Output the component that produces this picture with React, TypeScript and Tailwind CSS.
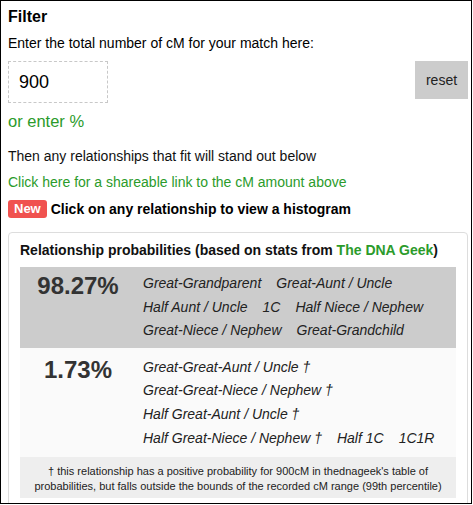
import React from 'react'

interface ProbRow {
  pct: string
  items: string[]
  bg: string
  pad: string
}

const rows: ProbRow[] = [
  {
    pct: '98.27%',
    items: [
      'Great-Grandparent',
      'Great-Aunt / Uncle',
      'Half Aunt / Uncle',
      '1C',
      'Half Niece / Nephew',
      'Great-Niece / Nephew',
      'Great-Grandchild',
    ],
    bg: 'bg-[#cccccc]',
    pad: 'pt-[5px] pb-[5px]',
  },
  {
    pct: '1.73%',
    items: [
      'Great-Great-Aunt / Uncle †',
      'Great-Great-Niece / Nephew †',
      'Half Great-Aunt / Uncle †',
      'Half Great-Niece / Nephew †',
      'Half 1C',
      '1C1R',
    ],
    bg: 'bg-[#fafafa]',
    pad: 'pt-[8px] pb-[7px]',
  },
]

function ProbabilityRow({ row }: { row: ProbRow }) {
  return (
    <div className={`flex gap-[7px] ${row.bg} ${row.pad}`}>
      <div className="w-[116px] shrink-0 text-center text-[24px] leading-[28px] font-bold text-[#333]">
        {row.pct}
      </div>
      <div className="flex flex-wrap gap-x-[15px] text-[14px] leading-[23.6px] italic text-[#222] pr-[8px]">
        {row.items.map((item) => (
          <span key={item} className="cursor-pointer whitespace-nowrap">
            {item}
          </span>
        ))}
      </div>
    </div>
  )
}

export default function App() {
  return (
    <div className="w-[472px] h-[504px] overflow-hidden border border-black bg-white pl-[7px] pt-[6px] font-['Liberation_Sans',Arial,sans-serif] text-black">
      <div className="w-[460px]">
        <div className="text-[16px] leading-[20px] font-bold">Filter</div>
        <div className="mt-[6px] text-[14px] leading-[20px]">
          Enter the total number of cM for your match here:
        </div>

        <div className="mt-[8px] flex items-start justify-between">
          <input
            defaultValue="900"
            className="w-[100px] h-[42px] border border-dashed border-[#c8c8c8] pl-[10px] text-[18px] outline-none font-['Liberation_Sans',Arial,sans-serif]"
          />
          <button className="h-[38px] w-[53px] bg-[#cccccc] text-[14px] text-[#222] font-['Liberation_Sans',Arial,sans-serif]">
            reset
          </button>
        </div>

        <div className="mt-[8px] text-[16.5px] leading-[20px] text-[#2b9b2b] cursor-pointer">or enter %</div>

        <div className="mt-[15px] text-[14px] leading-[20px] text-[#111]">
          Then any relationships that fit will stand out below
        </div>
        <div className="mt-[6px] text-[14px] leading-[20px] text-[#2b9b2b] cursor-pointer">
          Click here for a shareable link to the cM amount above
        </div>
        <div className="mt-[7px] flex items-center gap-[4px] text-[14px] leading-[20px]">
          <span className="rounded-[3px] bg-[#f0524f] px-[6px] text-[13px] leading-[18px] font-bold text-white">
            New
          </span>
          <span className="font-bold">Click on any relationship to view a histogram</span>
        </div>

        <div className="mt-[13px] rounded-[4px] border border-[#dddddd] px-[11px] pt-[7px] pb-[8px]">
          <div className="text-[14px] leading-[20px] font-bold text-[#111]">
            Relationship probabilities (based on stats from{' '}
            <span className="text-[#2b9b2b]">The DNA Geek</span>)
          </div>
          <div className="mt-[7px]">
            {rows.map((r) => (
              <ProbabilityRow key={r.pct} row={r} />
            ))}
          </div>
          <div className="bg-[#eeeeee] pt-[7px] pb-[4px] px-[8px] text-center text-[11px] leading-[15px] text-[#222]">
            † this relationship has a positive probability for 900cM in thednageek's table of
            probabilities, but falls outside the bounds of the recorded cM range (99th percentile)
          </div>
        </div>
      </div>
    </div>
  )
}
